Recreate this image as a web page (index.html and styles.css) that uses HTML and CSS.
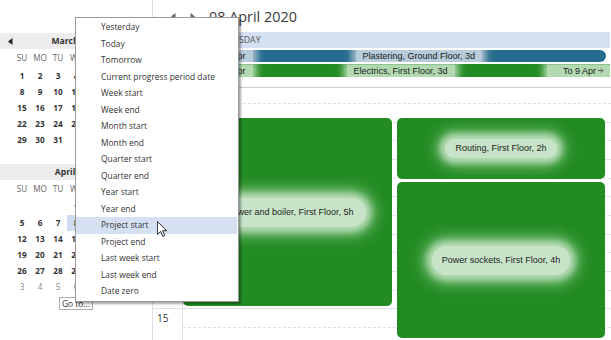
FILE: index.html
```html
<!DOCTYPE html>
<html>
<head>
<meta charset="utf-8">
<link rel="stylesheet" href="styles.css">
</head>
<body>
<div class="app">
  <aside class="side">
    <section class="month">
      <div class="mhead">
        <svg class="tri" width="5" height="7" viewBox="0 0 5 7"><polygon points="4.5,0 4.5,7 0,3.5"/></svg>
        <span class="mt">March 2020</span>
        <svg class="tri" width="5" height="7" viewBox="0 0 5 7"><polygon points="0.5,0 0.5,7 5,3.5"/></svg>
      </div>
      <div class="wk dn"><span>SU</span><span>MO</span><span>TU</span><span>WE</span><span>TH</span><span>FR</span><span>SA</span></div>
      <div class="wk dates">
        <span>1</span><span>2</span><span>3</span><span>4</span><span>5</span><span>6</span><span>7</span>
        <span>8</span><span>9</span><span>10</span><span>11</span><span>12</span><span>13</span><span>14</span>
        <span>15</span><span>16</span><span>17</span><span>18</span><span>19</span><span>20</span><span>21</span>
        <span>22</span><span>23</span><span>24</span><span>25</span><span>26</span><span>27</span><span>28</span>
        <span>29</span><span>30</span><span>31</span><span></span><span></span><span></span><span></span>
        <span></span><span></span><span></span><span></span><span></span><span></span><span></span>
      </div>
    </section>
    <section class="month">
      <div class="mhead">
        <svg class="tri hidden" width="5" height="7" viewBox="0 0 5 7"><polygon points="4.5,0 4.5,7 0,3.5"/></svg>
        <span class="mt">April 2020</span>
        <svg class="tri" width="5" height="7" viewBox="0 0 5 7"><polygon points="0.5,0 0.5,7 5,3.5"/></svg>
      </div>
      <div class="wk dn"><span>SU</span><span>MO</span><span>TU</span><span>WE</span><span>TH</span><span>FR</span><span>SA</span></div>
      <div class="wk dates">
        <span></span><span></span><span></span><span>1</span><span>2</span><span>3</span><span>4</span>
        <span>5</span><span>6</span><span>7</span><span class="sel">8</span><span>9</span><span>10</span><span>11</span>
        <span>12</span><span>13</span><span>14</span><span>15</span><span>16</span><span>17</span><span>18</span>
        <span>19</span><span>20</span><span>21</span><span>22</span><span>23</span><span>24</span><span>25</span>
        <span>26</span><span>27</span><span>28</span><span>29</span><span>30</span><span class="oth">1</span><span class="oth">2</span>
        <span class="oth">3</span><span class="oth">4</span><span class="oth">5</span><span class="oth">6</span><span class="oth">7</span><span class="oth">8</span><span class="oth">9</span>
      </div>
    </section>
    <button class="goto">Go to...</button>
  </aside>

  <main class="main">
    <div class="nav">
      <svg class="navtri" width="5" height="7" viewBox="0 0 5 7"><polygon points="4.5,0 4.5,7 0,3.5"/></svg>
      <svg class="navtri" width="5" height="7" viewBox="0 0 5 7"><polygon points="0.5,0 0.5,7 5,3.5"/></svg>
      <span class="date">08 April 2020</span>
    </div>
    <div class="dayhead">WEDNESDAY</div>
    <div class="allday">
      <div class="bar blue">
        <span class="lab"><svg class="barr" width="6" height="5" viewBox="0 0 6 5"><path d="M6 2.5H1.5M3 0.5L1 2.5L3 4.5"/></svg>From 6 Apr</span>
        <span class="lab mid m1">Plastering, Ground Floor, 3d</span>
      </div>
      <div class="bar green">
        <span class="lab"><svg class="barr" width="6" height="5" viewBox="0 0 6 5"><path d="M6 2.5H1.5M3 0.5L1 2.5L3 4.5"/></svg>From 7 Apr</span>
        <span class="lab mid m2">Electrics, First Floor, 3d</span>
        <span class="lab to">To 9 Apr<svg class="barr" width="6" height="5" viewBox="0 0 6 5"><path d="M0 2.5H4.5M3 0.5L5 2.5L3 4.5"/></svg></span>
      </div>
    </div>
    <div class="tg">
      <div class="rows">
        <div class="hr"><div class="hl">9</div><div class="sl"><div class="half"></div><div class="half"></div></div></div>
        <div class="hr"><div class="hl">10</div><div class="sl"><div class="half"></div><div class="half"></div></div></div>
        <div class="hr"><div class="hl">11</div><div class="sl"><div class="half"></div><div class="half"></div></div></div>
        <div class="hr"><div class="hl">12</div><div class="sl"><div class="half"></div><div class="half"></div></div></div>
        <div class="hr"><div class="hl">13</div><div class="sl"><div class="half"></div><div class="half"></div></div></div>
        <div class="hr"><div class="hl">14</div><div class="sl"><div class="half"></div><div class="half"></div></div></div>
        <div class="hr"><div class="hl">15</div><div class="sl"><div class="half"></div><div class="half"></div></div></div>
      </div>
      <div class="events">
        <div class="ev ev-big"><span class="pill p-big">Shower and boiler, First Floor, 5h</span></div>
        <div class="ev ev-route"><span class="pill p-route">Routing, First Floor, 2h</span></div>
        <div class="ev ev-power"><span class="pill p-power">Power sockets, First Floor, 4h</span></div>
      </div>
    </div>
  </main>
</div>

<ul class="menu">
  <li>Yesterday</li>
  <li>Today</li>
  <li>Tomorrow</li>
  <li>Current progress period date</li>
  <li>Week start</li>
  <li>Week end</li>
  <li>Month start</li>
  <li>Month end</li>
  <li>Quarter start</li>
  <li>Quarter end</li>
  <li>Year start</li>
  <li>Year end</li>
  <li class="hot">Project start</li>
  <li>Project end</li>
  <li>Last week start</li>
  <li>Last week end</li>
  <li>Date zero</li>
</ul>

<svg class="cursor" width="10" height="16" viewBox="0 0 12 19"><path d="M0.5 0.5V16L4.3 12.4L7 18.5L9.3 17.5L6.7 11.6H11.5Z"/></svg>
</body>
</html>
```

FILE: styles.css
```css
* { box-sizing: border-box; margin: 0; padding: 0; }
html, body { width: 611px; height: 340px; overflow: hidden; background: #fff; }
body { position: relative; font-family: "Open Sans", "Noto Sans", sans-serif; color: #333; }

.app { display: flex; height: 340px; }

/* left mini calendars */
.side {
  width: 153px; flex: none; padding-top: 33px;
  border-right: 1px solid #dedede;
  display: flex; flex-direction: column; align-items: center;
}
.month { width: 152px; }
.mhead {
  height: 16px; background: #eeecef;
  display: flex; align-items: center; justify-content: space-between;
  padding: 0 8px;
}
.tri { fill: #222; display: block; }
.tri.hidden { visibility: hidden; }
.mt { font-size: 8.6px; font-weight: 700; color: #333; }
.wk { display: grid; grid-template-columns: repeat(7, 18px); justify-content: center; }
.dn span { height: 17px; line-height: 17px; text-align: center; font-size: 8.2px; color: #666; }
.dates { margin-top: 2px; grid-auto-rows: 16px; }
.dates span { line-height: 16px; text-align: center; font-size: 8.2px; font-weight: 700; color: #333; }
.dates .oth { font-weight: 400; color: #888; }
.dates .sel { background: #cddcf1; }
.goto {
  margin-top: 2px; width: 34px; height: 13px;
  background: #fff; border: 1px solid #adadad;
  font-family: "Open Sans", sans-serif; font-size: 8.4px; color: #333; line-height: 11px;
}

/* main day view */
.main { flex: 1; display: flex; flex-direction: column; min-width: 0; }
.nav { height: 32px; display: flex; align-items: center; padding-left: 18px; }
.navtri { fill: #666; display: block; }
.navtri + .navtri { margin-left: 14px; }
.date { margin-left: 14px; font-size: 14.4px; color: #3a3a3a; }
.dayhead {
  height: 16px; line-height: 16px; background: #d5e0f2; margin-right: 1px;
  padding-left: 55px; font-size: 8.8px; color: #555;
}
.allday {
  height: 40px; padding: 2px 0 0 31px;
  border-bottom: 1px solid #cfcfcf;
  display: flex; flex-direction: column; gap: 2px;
}
.bar {
  display: flex; align-items: center; overflow: hidden;
  font-family: "Liberation Sans", Arial, sans-serif; font-size: 9px; color: #1a1a1a;
  padding-left: 2px;
}
.bar.blue { height: 12px; width: 422px; background: #256b8e; border-radius: 0 6px 6px 0; }
.bar.green { height: 13px; width: 426px; background: #238b23; }
.lab { display: flex; align-items: center; gap: 2px; padding: 0 7px; line-height: 12px; white-space: nowrap; }
.blue .lab { background: #b7cbd9; box-shadow: 0 0 7px 4px #a9c1d1; }
.green .lab { background: #b3d9b3; box-shadow: 0 0 7px 4px #a2d0a2; }
.barr { fill: none; stroke: #555; stroke-width: 1; display: block; }
.m1 { margin-left: 103px; }
.m2 { margin-left: 94px; }
.to { margin-left: auto; padding-left: 16px; padding-right: 6px; }

/* time grid */
.tg { flex: 1; position: relative; overflow: hidden; }
.rows { margin-top: -3.6px; }
.hr { display: flex; height: 37.3px; border-top: 1px solid #e2e2e2; }
.hl { width: 30px; border-right: 1px solid #e2e2e2; font-size: 10px; color: #333; padding: 2px 0 0 4px; line-height: 14px; }
.sl { flex: 1; display: flex; flex-direction: column; }
.half { flex: 1; }
.half + .half { border-top: 1px dashed #e0e0e0; }

.events { position: absolute; left: 30px; top: 0; right: 0; bottom: 0; }
.ev {
  position: absolute; background: #228b22; border-radius: 5px;
  display: flex; align-items: center; justify-content: center; overflow: hidden;
}
.ev-big { left: 0; top: 30px; width: 209px; height: 188px; }
.ev-route { left: 214px; top: 30px; width: 208px; height: 61px; }
.ev-power { left: 214px; top: 94px; width: 208px; height: 156px; }
.pill {
  font-family: "Liberation Sans", Arial, sans-serif; font-size: 9px; color: #1e1e1e;
  white-space: nowrap; background: #c8e4c8; border-radius: 16px; line-height: 11px;
}
.p-big { padding: 9px 12px; box-shadow: 0 0 6px 5px #b6dbb6, 0 0 14px 10px #72ba72; }
.p-route { padding: 4px 10px; box-shadow: 0 0 6px 5px #b6dbb6, 0 0 14px 9px #72ba72; }
.p-power { padding: 9px 10px; box-shadow: 0 0 6px 5px #b6dbb6, 0 0 14px 10px #72ba72; }

/* dropdown menu */
.menu {
  position: absolute; left: 75px; top: 17px; width: 164px;
  list-style: none; background: #fff;
  border: 1px solid #9a9a9a; padding: 1px 1px 1px 0;
  box-shadow: 2px 2px 2px rgba(0,0,0,0.35);
}
.menu li {
  height: 16.5px; line-height: 16.5px; padding-left: 25px;
  font-size: 8.4px; color: #333; white-space: nowrap;
}
.menu li.hot { background: #d5e1f2; }

.cursor { position: absolute; left: 157px; top: 221px; fill: #fff; stroke: #000; stroke-width: 1; }
```
